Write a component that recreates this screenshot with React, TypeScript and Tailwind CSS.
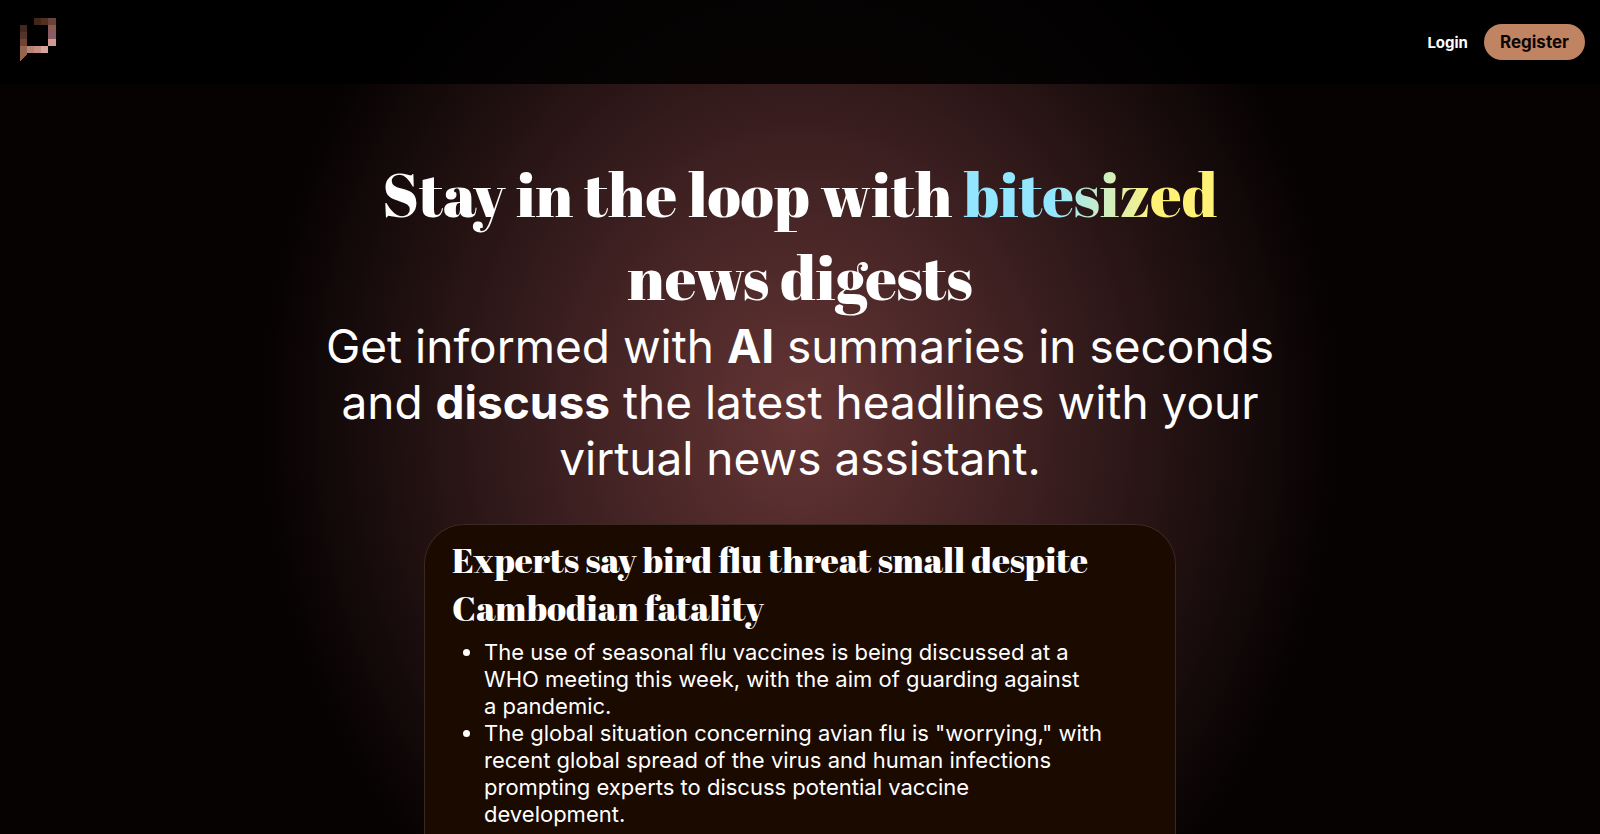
const pixels: [number, number, string][] = [
  [14, 0, '#442619'], [21, 0, '#50301f'], [28, 0, '#694238'],
  [28, 7, '#8a5a56'], [28, 14, '#8c5b62'], [28, 21, '#d39a94'],
  [0, 7, '#432721'], [0, 14, '#52342a'], [0, 21, '#704431'],
  [7, 28, '#b8847a'], [14, 28, '#c78f84'], [21, 28, '#d5a5a0'],
];

function Logo() {
  return (
    <svg viewBox="0 0 36 43" className="h-[43px] w-9" shapeRendering="crispEdges" aria-hidden="true">
      {pixels.map(([x, y, fill]) => (
        <rect key={`${x}-${y}`} x={x} y={y} width={x === 28 ? 8 : 7} height="7" fill={fill} />
      ))}
      <path d="M0 28h7v8L0 43z" fill="#94644f" />
    </svg>
  );
}

const points = [
  'The use of seasonal flu vaccines is being discussed at a WHO meeting this week, with the aim of guarding against a\u00a0pandemic.',
  'The global situation concerning avian flu is "worrying," with recent global spread of the virus and human infections prompting experts to discuss potential vaccine development.',
];

export default function App() {
  return (
    <div className="flex h-screen flex-col overflow-hidden bg-[#060202] bg-[radial-gradient(540px_625px_at_50%_50%,#653535_0%,#3c1f20_45%,#060202_100%)] font-['Inter',sans-serif] text-white">
      <header className="flex h-[84px] shrink-0 items-center justify-between bg-black/85 pr-[15px] pl-5">
        <a href="#" aria-label="Home" className="-mt-1.5">
          <Logo />
        </a>
        <nav className="flex items-center gap-4">
          <a href="#login" className="pt-0.5 text-[15px] font-bold">Login</a>
          <button type="button" className="h-9 rounded-full bg-[#c08462] px-4 pt-0.5 text-[17px] font-bold text-[#0c0402]">Register</button>
        </nav>
      </header>
      <main className="flex flex-col items-center pt-[68px]">
        <h1 className="max-w-[960px] text-center font-['Abril_Fatface','Liberation_Serif',serif] text-[61px] leading-[83px] font-normal">
          Stay in the loop with{' '}
          <span className="bg-linear-to-r from-[#93e6ff] from-35% to-[#fff176] to-75% bg-clip-text text-transparent">bitesized</span>
          <br />
          news digests
        </h1>
        <p className="max-w-[960px] text-center text-[46px] leading-[56px] font-normal">
          Get informed with <b className="font-bold">AI</b> summaries in seconds and <b className="font-bold">discuss</b> the latest headlines with your virtual news assistant.
        </p>
        <article className="mt-[38px] w-full max-w-[752px] rounded-t-[40px] border border-b-0 border-[#3a2822] bg-[#1a0a00] px-[27px] pt-[11px] pb-10">
          <h2 className="font-['Abril_Fatface','Liberation_Serif',serif] text-[35px] leading-[48px] font-normal">
            Experts say bird flu threat small despite Cambodian fatality
          </h2>
          <ul className="mt-[7px] list-disc pr-10 pl-8 text-[22px] leading-[27px] font-normal">
            {points.map((p) => <li key={p}>{p}</li>)}
          </ul>
        </article>
      </main>
    </div>
  );
}
